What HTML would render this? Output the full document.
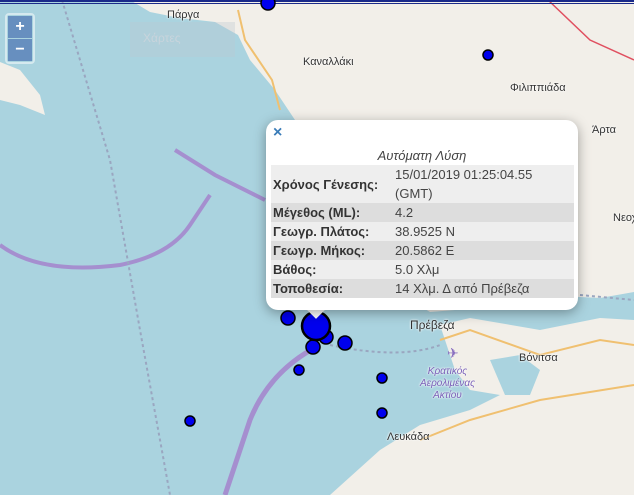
<!DOCTYPE html>
<html><head><meta charset="utf-8"><style>
body{margin:0;width:634px;height:495px;overflow:hidden;position:relative;font-family:"Liberation Sans","DejaVu Sans",sans-serif;background:#aad3df}
svg{position:absolute;left:0;top:0}
.lbl{position:absolute;font-size:11px;color:#333;text-shadow:0 0 2px #fff,0 0 2px #fff}
.zoom{position:absolute;left:5px;top:13px;width:26px;border:2px solid rgba(255,255,255,.5);border-radius:4px}
.zoom div{height:22px;background:rgba(80,120,180,.75);color:#fff;font-weight:bold;font-size:16px;text-align:center;line-height:22px;margin:1px}
.pop{position:absolute;left:266px;top:120px;width:312px;height:190px;background:#fff;border-radius:12px;box-shadow:0 3px 12px rgba(0,0,0,.35)}
.tip{position:absolute;left:309px;top:302px;width:14px;height:14px;background:#fff;transform:rotate(45deg)}
.x{position:absolute;left:7px;top:4px;color:#3a7cb8;font-weight:bold;font-size:16px}
.t{position:absolute;left:0;width:100%;top:28px;text-align:center;font-style:italic;font-size:13px;color:#444}
table{position:absolute;left:5px;top:45px;width:303px;border-collapse:collapse;font-size:13px;color:#444;table-layout:fixed}
td{padding:0 2px;line-height:19px;vertical-align:middle}
td.k{font-weight:bold;color:#333;width:118px}
tr:nth-child(odd){background:#eee}tr:nth-child(even){background:#ddd}
</style></head><body>
<svg width="634" height="495">
<path d="M130,0 L634,0 L634,292 L600,298 L560,296 L520,300 L480,302 L455,310 L430,312 L410,300 L395,285 L385,250 L360,200 L320,150 L295,120 L275,90 L250,60 L238,35 L215,22 L180,18 L150,12 Z" fill="#f2efe9"/>
<path d="M440,325 L470,318 L540,330 L600,318 L634,320 L634,495 L330,495 L380,450 L420,425 L470,410 L500,395 L470,390 L455,370 Z" fill="#f2efe9"/>
<path d="M0,62 L20,70 L40,95 L45,115 L20,105 L0,100 Z" fill="#f2efe9"/>
<path d="M490,360 L520,355 L540,370 L530,395 L505,395 Z" fill="#aad3df"/>
<path d="M238,10 L245,40 L272,80 L280,110" stroke="#f0c070" stroke-width="2" fill="none"/>
<path d="M440,340 L470,330 L540,355 L600,340 L634,345" stroke="#f0c070" stroke-width="2" fill="none"/>
<path d="M420,440 L470,420 L540,400 L634,385" stroke="#f0c070" stroke-width="2" fill="none"/>
<path d="M548,0 L590,40 L634,60" stroke="#e05060" stroke-width="1.5" fill="none"/>
<path d="M175,150 L215,175 L265,200" stroke="#a58fcf" stroke-width="4" fill="none"/>
<path d="M0,245 Q40,275 120,265 Q170,255 190,225 L210,195" stroke="#a58fcf" stroke-width="4" fill="none"/>
<path d="M320,345 Q270,370 250,420 L225,495" stroke="#a58fcf" stroke-width="5" fill="none"/>
<path d="M62,0 L110,160 L140,330 L170,495" stroke="#9aa6c0" stroke-width="2" stroke-dasharray="3,3" fill="none"/>
<path d="M330,345 Q400,360 440,345" stroke="#9aa6c0" stroke-width="2" stroke-dasharray="3,3" fill="none"/>
<path d="M580,295 L634,300" stroke="#9aa6c0" stroke-width="2" stroke-dasharray="3,3" fill="none"/>
<rect x="0" y="0" width="634" height="2" fill="#1a2a8a"/><rect x="0" y="3" width="634" height="1" fill="#1a2a8a"/>
<rect x="130" y="22" width="105" height="35" fill="rgba(190,200,210,.35)"/>
<g fill="#0000ee" stroke="#000" stroke-width="1.5">
<circle cx="268" cy="3" r="7"/><circle cx="488" cy="55" r="5"/>
<circle cx="288" cy="318" r="7"/><circle cx="326" cy="337" r="7"/><circle cx="313" cy="347" r="7"/><circle cx="345" cy="343" r="7"/>
<circle cx="316" cy="326" r="14" stroke-width="2.5"/>
<circle cx="299" cy="370" r="5"/><circle cx="382" cy="378" r="5"/><circle cx="382" cy="413" r="5"/><circle cx="190" cy="421" r="5"/>
</g>
<text x="447" y="358" fill="#8a70c0" font-size="14">✈</text>
</svg>
<div class="lbl" style="left:167px;top:9px">Πάργα</div>
<div class="lbl" style="left:143px;top:31px;color:#c8d4dc;text-shadow:none;font-size:12px">Χάρτες</div>
<div class="lbl" style="left:303px;top:56px">Καναλλάκι</div>
<div class="lbl" style="left:510px;top:82px">Φιλιππιάδα</div>
<div class="lbl" style="left:592px;top:124px">Άρτα</div>
<div class="lbl" style="left:613px;top:212px">Νεοχ</div>
<div class="lbl" style="left:410px;top:318px;font-size:12px">Πρέβεζα</div>
<div class="lbl" style="left:519px;top:352px">Βόνιτσα</div>
<div class="lbl" style="left:420px;top:366px;font-size:10px;font-style:italic;color:#7a60b8;text-align:center;line-height:12px">Κρατικός<br>Αερολιμένας<br>Ακτίου</div>
<div class="lbl" style="left:387px;top:431px">Λευκάδα</div>
<div class="zoom"><div>+</div><div>−</div></div>
<div class="tip"></div>
<div class="pop"><div class="x">×</div><div class="t">Αυτόματη Λύση</div>
<table>
<tr><td class="k">Χρόνος Γένεσης:</td><td>15/01/2019 01:25:04.55 (GMT)</td></tr>
<tr><td class="k">Μέγεθος (ML):</td><td>4.2</td></tr>
<tr><td class="k">Γεωγρ. Πλάτος:</td><td>38.9525 N</td></tr>
<tr><td class="k">Γεωγρ. Μήκος:</td><td>20.5862 E</td></tr>
<tr><td class="k">Βάθος:</td><td>5.0 Χλμ</td></tr>
<tr><td class="k">Τοποθεσία:</td><td>14 Χλμ. Δ από Πρέβεζα</td></tr>
</table></div>
</body></html>
